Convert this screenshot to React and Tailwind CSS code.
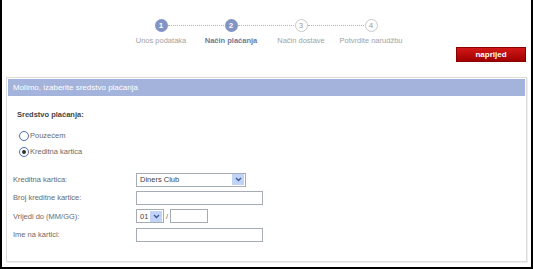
import React from 'react';

const steps = [
  { n: 1, label: 'Unos podataka', done: true },
  { n: 2, label: 'Način plaćanja', done: true, active: true },
  { n: 3, label: 'Način dostave' },
  { n: 4, label: 'Potvrdite narudžbu' },
];

function Step({ step, last }) {
  return (
    <div className="relative flex w-[70px] flex-col items-center">
      {!last && (
        <div className="absolute left-[42px] top-[6px] w-[56px] border-t border-dotted border-[#b5b5b5]" />
      )}
      <div
        className={
          step.done
            ? 'flex h-[13px] w-[13px] items-center justify-center rounded-full bg-[#8294c4] text-[8px] font-bold leading-none text-white'
            : 'flex h-[13px] w-[13px] items-center justify-center rounded-full border border-[#c8c8c8] bg-white text-[8px] leading-none text-[#9a9a9a]'
        }
      >
        {step.n}
      </div>
      <div
        className={
          step.active
            ? 'mt-[3px] whitespace-nowrap text-[7.5px] font-bold text-[#6c7a99]'
            : 'mt-[3px] whitespace-nowrap text-[7.5px] text-[#a2a2a2]'
        }
      >
        {step.label}
      </div>
    </div>
  );
}

function Select({ value, width }) {
  return (
    <div className={`flex h-[14px] items-center justify-between border border-[#a5acb5] bg-white pl-[3px] ${width}`}>
      <span className="text-[7.5px] text-[#444]">{value}</span>
      <span className="mr-[1px] flex h-[11px] w-[12px] items-center justify-center bg-[#c1d3f7]">
        <svg width="7" height="5" viewBox="0 0 7 5">
          <path d="M1 1 L3.5 3.5 L6 1" stroke="#3d5a98" strokeWidth="1.4" fill="none" />
        </svg>
      </span>
    </div>
  );
}

function Row({ label, children }) {
  return (
    <div className="flex h-[18.3px] items-center">
      <div className="w-[123px] text-[7.5px] text-[#6a6a6a]">{label}</div>
      <div className="flex items-center">{children}</div>
    </div>
  );
}

function Radio({ checked, label }) {
  return (
    <div className="flex h-[16px] items-center gap-[1px]">
      <span className="flex h-[10px] w-[10px] items-center justify-center rounded-full border border-[#4a6fa8] bg-white">
        {checked && <span className="h-[4px] w-[4px] rounded-full bg-[#333]" />}
      </span>
      <span className="text-[7.5px] text-[#6a6a6a]">{label}</span>
    </div>
  );
}

export default function App() {
  return (
    <div
      className="h-[269px] w-[533px] border-x-2 border-b-2 border-black bg-white"
      style={{ fontFamily: '"Liberation Sans", Arial, sans-serif' }}
    >
      <div className="flex justify-center pt-[19px] pr-[1px]">
        {steps.map((s, i) => (
          <Step key={s.n} step={s} last={i === steps.length - 1} />
        ))}
      </div>

      <div className="mt-[1px] flex justify-end pr-[5px]">
        <button className="h-[15px] w-[70px] border border-[#8a0000] bg-gradient-to-b from-[#d21818] to-[#a00000] text-[8px] font-bold text-white">
          naprijed
        </button>
      </div>

      <div className="mx-[4px] mt-[15px] h-[185px] border border-[#dcdcdc] p-[1px] shadow-[1px_1px_0_#eee]">
        <div className="flex h-[17px] items-center bg-[#a3b3dc] pl-[5px] text-[8px] text-white">
          Molimo, izaberite sredstvo plaćanja
        </div>

        <div className="pl-[9px] pt-[13px] text-[7.5px] font-bold text-[#444]">Sredstvo plaćanja:</div>

        <div className="mt-[7px] pl-[11px]">
          <Radio label="Pouzećem" />
          <Radio label="Kreditna kartica" checked />
        </div>

        <div className="mt-[11px] pl-[5px]">
          <Row label="Kreditna kartica:">
            <Select value="Diners Club" width="w-[110px]" />
          </Row>
          <Row label="Broj kreditne kartice:">
            <div className="h-[14px] w-[127px] border border-[#a5acb5] bg-white" />
          </Row>
          <Row label="Vrijedi do (MM/GG):">
            <Select value="01" width="w-[28px]" />
            <span className="mx-[2px] text-[7.5px] text-[#666]">/</span>
            <div className="h-[14px] w-[38px] border border-[#a5acb5] bg-white" />
          </Row>
          <Row label="Ime na kartici:">
            <div className="h-[14px] w-[127px] border border-[#a5acb5] bg-white" />
          </Row>
        </div>
      </div>
    </div>
  );
}
